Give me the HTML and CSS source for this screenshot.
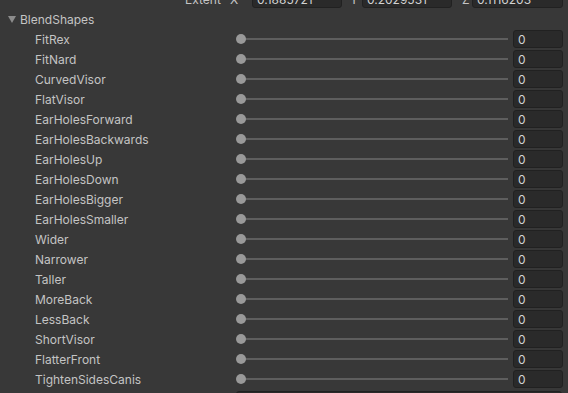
FILE: index.html
```html
<!DOCTYPE html>
<html lang="en">
<head>
  <meta charset="UTF-8">
  <title>BlendShapes</title>
  <link rel="stylesheet" href="styles.css">
</head>
<body>
  <div class="inspector">

    <!-- Bounds row, cut off at the top -->
    <div class="row bounds">
      <span class="bounds-label">Extent</span>
      <span class="axis axis-x">X</span><span class="field wide">0.1885721</span>
      <span class="axis axis-y">Y</span><span class="field wide">0.2029531</span>
      <span class="axis axis-z">Z</span><span class="field wide last">0.1116203</span>
    </div>

    <div class="row foldout">
      <span class="arrow"></span>
      <span>BlendShapes</span>
    </div>

    <div class="row shape"><span class="label">FitRex</span><div class="slider"><span class="knob"></span></div><span class="field">0</span></div>
    <div class="row shape"><span class="label">FitNard</span><div class="slider"><span class="knob"></span></div><span class="field">0</span></div>
    <div class="row shape"><span class="label">CurvedVisor</span><div class="slider"><span class="knob"></span></div><span class="field">0</span></div>
    <div class="row shape"><span class="label">FlatVisor</span><div class="slider"><span class="knob"></span></div><span class="field">0</span></div>
    <div class="row shape"><span class="label">EarHolesForward</span><div class="slider"><span class="knob"></span></div><span class="field">0</span></div>
    <div class="row shape"><span class="label">EarHolesBackwards</span><div class="slider"><span class="knob"></span></div><span class="field">0</span></div>
    <div class="row shape"><span class="label">EarHolesUp</span><div class="slider"><span class="knob"></span></div><span class="field">0</span></div>
    <div class="row shape"><span class="label">EarHolesDown</span><div class="slider"><span class="knob"></span></div><span class="field">0</span></div>
    <div class="row shape"><span class="label">EarHolesBigger</span><div class="slider"><span class="knob"></span></div><span class="field">0</span></div>
    <div class="row shape"><span class="label">EarHolesSmaller</span><div class="slider"><span class="knob"></span></div><span class="field">0</span></div>
    <div class="row shape"><span class="label">Wider</span><div class="slider"><span class="knob"></span></div><span class="field">0</span></div>
    <div class="row shape"><span class="label">Narrower</span><div class="slider"><span class="knob"></span></div><span class="field">0</span></div>
    <div class="row shape"><span class="label">Taller</span><div class="slider"><span class="knob"></span></div><span class="field">0</span></div>
    <div class="row shape"><span class="label">MoreBack</span><div class="slider"><span class="knob"></span></div><span class="field">0</span></div>
    <div class="row shape"><span class="label">LessBack</span><div class="slider"><span class="knob"></span></div><span class="field">0</span></div>
    <div class="row shape"><span class="label">ShortVisor</span><div class="slider"><span class="knob"></span></div><span class="field">0</span></div>
    <div class="row shape"><span class="label">FlatterFront</span><div class="slider"><span class="knob"></span></div><span class="field">0</span></div>
    <div class="row shape"><span class="label">TightenSidesCanis</span><div class="slider"><span class="knob"></span></div><span class="field">0</span></div>

    <!-- next property, mostly below the fold -->
    <div class="row next">
      <span class="label"></span>
      <span class="field long"></span>
    </div>
  </div>
</body>
</html>
```

FILE: styles.css
```css
body {
  margin: 0;
  background: #383838;
  font-family: Inter, "Liberation Sans", sans-serif;
  font-size: 12px;
  color: #c4c4c4;
  overflow: hidden;
  height: 393px;
}

.inspector {
  margin-top: -11px;
  padding-right: 5px;
}

.row {
  height: 20px;
  display: flex;
  align-items: center;
}

/* bounds row */
.bounds-label {
  margin-left: 185px;
  width: 45px;
}

.axis-x {
  width: 22px;
}

.axis-y {
  margin-left: 8px;
  width: 12px;
}

.axis-z {
  margin-left: 10px;
  width: 10px;
}

.field {
  box-sizing: border-box;
  height: 18px;
  background: #2a2a2a;
  border: 1px solid #212121;
  border-radius: 3px;
  color: #d2d2d2;
  padding: 1px 4px 0;
  line-height: 15px;
  width: 50px;
  flex-shrink: 0;
}

.field.wide {
  width: 90px;
}

.field.wide.last {
  width: 91px;
}

.field.long {
  width: 326px;
}

/* foldout header */
.foldout {
  padding-left: 8px;
}

.arrow {
  width: 0;
  height: 0;
  border-left: 4px solid transparent;
  border-right: 4px solid transparent;
  border-top: 7px solid #8c8c8c;
  margin-right: 4px;
  margin-top: 1px;
}

/* blend shape rows */
.shape .label,
.next .label {
  width: 236px;
  padding-left: 35px;
  box-sizing: border-box;
  flex-shrink: 0;
}

.slider {
  flex: 1;
  position: relative;
  height: 20px;
  margin-right: 5px;
}

.slider::before {
  content: "";
  position: absolute;
  left: 5px;
  right: 0;
  top: 9px;
  height: 2px;
  background: #5e5e5e;
}

.knob {
  position: absolute;
  left: 0;
  top: 5px;
  width: 10px;
  height: 10px;
  border-radius: 50%;
  background: #999999;
}

.next {
  align-items: flex-start;
  padding-top: 2px;
}
```
